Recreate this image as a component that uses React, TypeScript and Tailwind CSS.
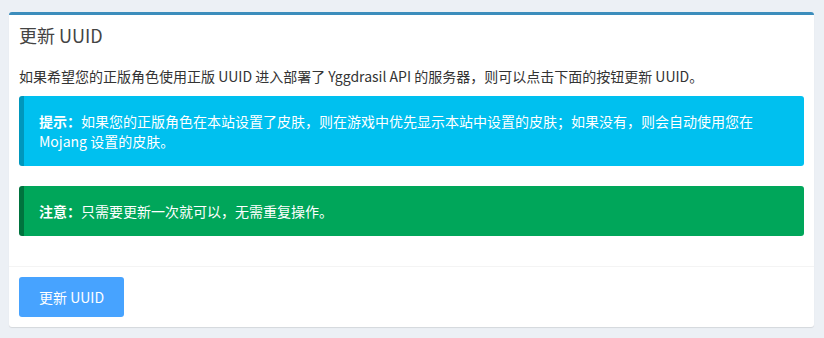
export default function App() {
  return (
    <div
      className="min-h-[338px] bg-[#ecf0f5] pl-[9px] pr-[10px] pt-[12px] text-[14px] leading-[20px] text-[#333]"
      style={{ fontFamily: '"Noto Sans CJK SC", "Noto Sans", sans-serif' }}
    >
      <div className="rounded-[3px] border-t-[3px] border-[#3c8dbc] bg-white shadow-[0_1px_1px_rgba(0,0,0,0.1)]">
        <div className="p-[10px]">
          <h3 className="text-[18px] leading-[21px] text-[#444]">更新 UUID</h3>
        </div>
        <div className="p-[10px]">
          <p className="mb-[10px]">
            如果希望您的正版角色使用正版 UUID 进入部署了 Yggdrasil API 的服务器，则可以点击下面的按钮更新 UUID。
          </p>
          <div className="mb-[20px] rounded-[3px] border-l-[5px] border-[#0097bc] bg-[#00c0ef] py-[15px] pl-[15px] pr-[30px] text-white">
            <b>提示：</b>如果您的正版角色在本站设置了皮肤，则在游戏中优先显示本站中设置的皮肤；如果没有，则会自动使用您在 Mojang 设置的皮肤。
          </div>
          <div className="mb-[20px] rounded-[3px] border-l-[5px] border-[#00733e] bg-[#00a65a] py-[15px] pl-[15px] pr-[30px] text-white">
            <b>注意：</b>只需要更新一次就可以，无需重复操作。
          </div>
        </div>
        <div className="border-t border-[#f4f4f4] p-[10px]">
          <button
            type="button"
            className="h-[40px] rounded-[3px] bg-[#47a3ff] px-[20px] text-white"
          >
            更新 UUID
          </button>
        </div>
      </div>
    </div>
  );
}
